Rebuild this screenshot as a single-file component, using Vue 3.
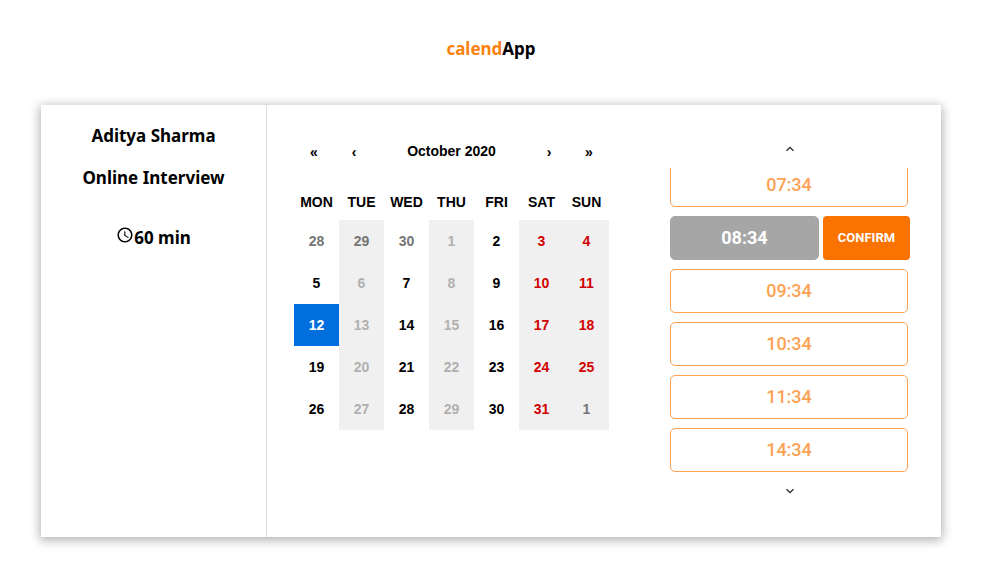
<script setup>
import { ref } from 'vue'

const weekdays = ['MON', 'TUE', 'WED', 'THU', 'FRI', 'SAT', 'SUN']
const numbers = [28, 29, 30, ...Array.from({ length: 31 }, (_, i) => i + 1), 1]
const days = numbers.map((n, i) => {
  const column = i % 7
  return {
    n,
    outside: i < 3 || i === 34,
    disabled: [1, 3, 5, 6].includes(column),
    weekend: column > 4,
  }
})
const weeks = [0, 1, 2, 3, 4].map((w) => days.slice(w * 7, w * 7 + 7))
const times = ['07:34', '08:34', '09:34', '10:34', '11:34', '14:34']
const selectedDay = ref(14)
const selectedTime = ref('08:34')
</script>

<template>
  <div class="page">
    <header class="brand"><span class="accent">calend</span>App</header>
    <main class="card">
      <aside class="details">
        <h2>Aditya Sharma</h2>
        <h2>Online Interview</h2>
        <p class="duration">
          <svg class="clock" viewBox="0 0 24 24" aria-hidden="true">
            <path d="M11.99 2C6.47 2 2 6.48 2 12s4.47 10 9.99 10C17.52 22 22 17.52 22 12S17.52 2 11.99 2zM12 20c-4.42 0-8-3.58-8-8s3.58-8 8-8 8 3.58 8 8-3.58 8-8 8z" />
            <path d="M12.500 7H11v6l5.250 3.150.750-1.230-4.500-2.670z" />
          </svg>
          <span>60 min</span>
        </p>
      </aside>
      <section class="booking">
        <div class="calendar">
          <nav class="months">
            <button type="button" class="arrow" aria-label="Previous year">«</button>
            <button type="button" class="arrow" aria-label="Previous month">‹</button>
            <button type="button" class="month">October 2020</button>
            <button type="button" class="arrow" aria-label="Next month">›</button>
            <button type="button" class="arrow" aria-label="Next year">»</button>
          </nav>
          <table>
            <thead>
              <tr><th v-for="d in weekdays" :key="d" scope="col">{{ d }}</th></tr>
            </thead>
            <tbody>
              <tr v-for="(week, w) in weeks" :key="w">
                <td v-for="(day, d) in week" :key="d">
                  <button
                    type="button"
                    class="day"
                    :class="{
                      disabled: day.disabled,
                      weekend: day.weekend,
                      outside: day.outside,
                      selected: selectedDay === w * 7 + d,
                    }"
                    :disabled="day.disabled"
                    @click="selectedDay = w * 7 + d"
                  >{{ day.n }}</button>
                </td>
              </tr>
            </tbody>
          </table>
        </div>
        <div class="slots">
          <button type="button" class="scroll" aria-label="Earlier times">
            <svg viewBox="0 0 10 6" aria-hidden="true"><path d="M1.5 4.8 5 1.5 8.5 4.8" /></svg>
          </button>
          <ul>
            <li v-for="t in times" :key="t">
              <button
                type="button"
                class="time"
                :class="{ picked: t === selectedTime }"
                @click="selectedTime = t"
              >{{ t }}</button>
              <button v-if="t === selectedTime" type="button" class="confirm">CONFIRM</button>
            </li>
          </ul>
          <button type="button" class="scroll" aria-label="Later times">
            <svg viewBox="0 0 10 6" aria-hidden="true"><path d="M1.5 1.2 5 4.5 8.5 1.2" /></svg>
          </button>
        </div>
      </section>
    </main>
  </div>
</template>

<style>
body {
  margin: 0;
  background: #fff;
}
</style>

<style scoped>
.page {
  padding: 37px 60px 44px 41px;
  color: #000;
  font-family: "Noto Sans", "Open Sans", sans-serif;
}
button {
  margin: 0;
  padding: 0;
  border: 0;
  background: none;
  color: inherit;
  font: inherit;
  cursor: pointer;
}
.brand {
  margin-bottom: 44px;
  text-align: center;
  font-size: 17px;
  font-weight: 700;
  line-height: 24px;
}
.accent {
  color: #f98310;
}
.card {
  display: grid;
  grid-template-columns: 1fr 3fr;
  min-height: 432px;
  background: #fff;
  box-shadow: 0 2px 10px 1px rgba(0, 0, 0, 0.32);
}
.details {
  padding-top: 19px;
  text-align: center;
}
.details h2,
.duration {
  margin: 0 0 18px;
  font-size: 17px;
  font-weight: 700;
  line-height: 24px;
}
.duration {
  display: flex;
  justify-content: center;
  margin-top: 36px;
}
.clock {
  width: 18px;
  height: 18px;
}
.booking {
  display: flex;
  justify-content: space-between;
  gap: 24px;
  padding: 25px 31px 25px 27px;
  border-left: 1px solid #ddd;
}
.calendar {
  flex: 0 1 315px;
  font-family: "Liberation Sans", Arial, sans-serif;
  font-size: 14px;
  font-weight: 700;
}
.months {
  display: flex;
  height: 44px;
  margin-bottom: 12px;
}
.arrow {
  flex: 0 0 40px;
}
.month {
  flex: 1;
  padding-bottom: 2px;
}
table {
  width: 100%;
  border-collapse: collapse;
  table-layout: fixed;
}
th {
  height: 32px;
  padding: 0 0 2px;
}
td {
  padding: 0;
}
.day {
  display: block;
  width: 100%;
  height: 42px;
  padding-bottom: 1px;
}
.day.disabled {
  background: #f0f0f0;
  color: #b0b0b0;
}
.day.weekend {
  color: #d10000;
}
.day.outside {
  color: #757575;
}
.day.selected {
  background: #006edc;
  color: #fff;
}
.slots {
  display: flex;
  flex: 0 0 240px;
  flex-direction: column;
  font-family: Roboto, sans-serif;
  font-weight: 500;
}
.scroll {
  display: flex;
  align-items: center;
  justify-content: center;
  height: 38px;
}
.scroll svg {
  width: 10px;
  height: 6px;
  fill: none;
  stroke: #333;
  stroke-width: 1.4;
}
ul {
  display: flex;
  flex-direction: column;
  justify-content: flex-end;
  gap: 9px;
  height: 304px;
  margin: 0;
  padding: 0;
  overflow: hidden;
  list-style: none;
}
li {
  display: flex;
  flex-shrink: 0;
  gap: 4px;
  height: 44px;
}
.time {
  width: 238px;
  padding-bottom: 2px;
  border: 1px solid #fca253;
  border-radius: 5px;
  color: #fca253;
  font-size: 18px;
}
.time.picked {
  width: 149px;
  border-color: #a6a6a6;
  background: #a6a6a6;
  color: #fff;
  font-weight: 700;
}
.confirm {
  flex: 1;
  padding-bottom: 2px;
  border-radius: 4px;
  background: #fa7200;
  color: #fff;
  font-size: 13px;
  font-weight: 700;
}
</style>
